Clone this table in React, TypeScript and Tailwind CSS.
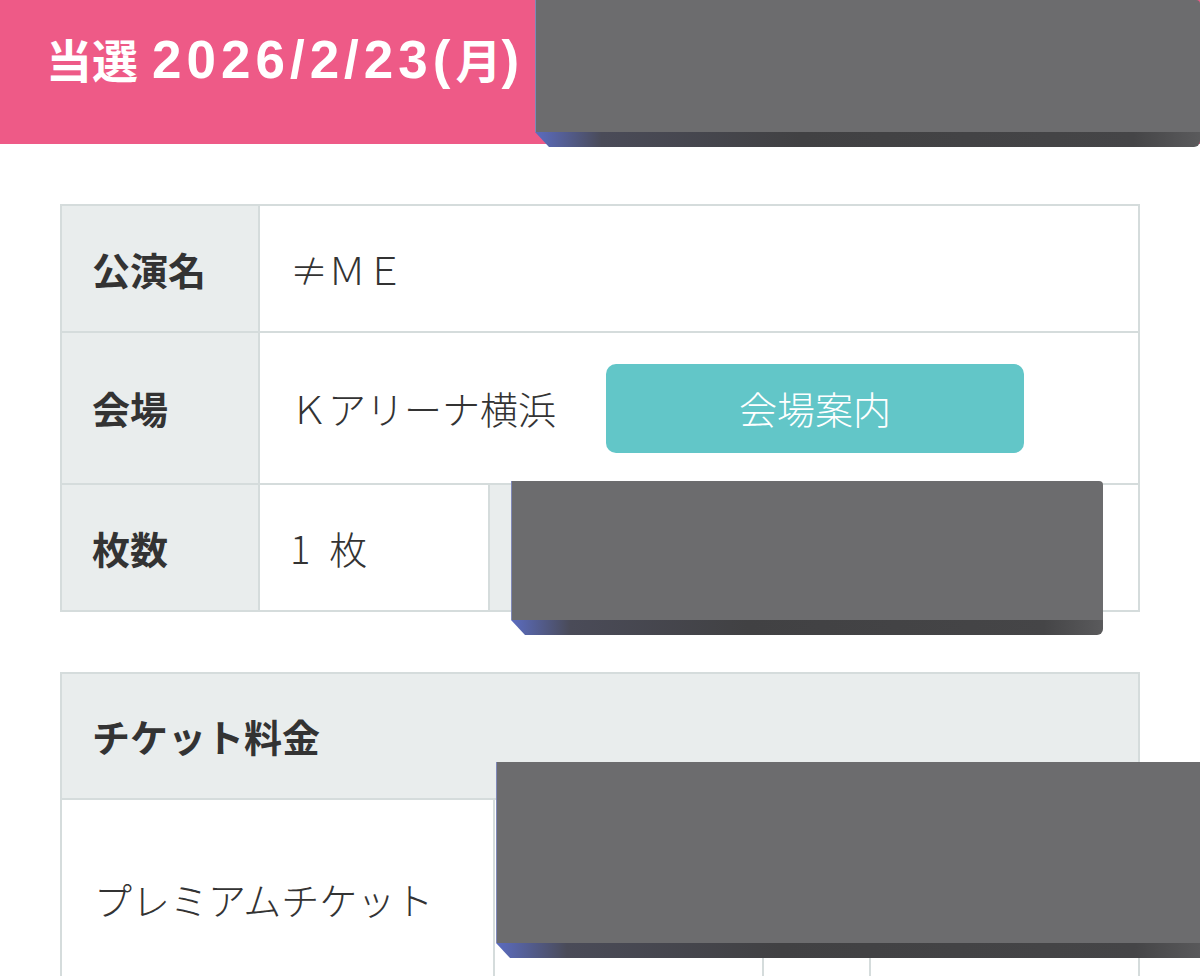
import React from 'react'

// gray redaction block laid over the page (face + darker bevel along the bottom)
function Redact({ className }: { className: string }) {
  return (
    <div className={`absolute flex flex-col ${className}`}>
      <div className="flex-1 bg-[#6c6c6e] border-l border-[#7f88b8] rounded-tr-[4px]" />
      <div
        className="h-[15px] bg-[linear-gradient(90deg,#5b6cc0_0%,#4a4b58_10%,#414143_40%,#454547_90%,#5a5a5c_100%)] rounded-br-[6px]"
        style={{ clipPath: 'polygon(0 0, 100% 0, 100% 100%, 14px 100%)' }}
      />
    </div>
  )
}

const cell = 'border-2 border-[#d5dcdc]'
const label = `${cell} bg-[#e9eded] font-bold text-left pl-[30px] w-[198px]`
const latin = "font-['Liberation_Sans','Noto_Sans_CJK_JP',sans-serif] text-[53px]"

export default function App() {
  return (
    <div className="relative w-[1200px] h-[976px] overflow-hidden bg-white text-[#333] font-['Noto_Sans_CJK_JP',sans-serif]">
      <header className="h-[144px] bg-[#ee5a87] flex items-center pl-[46px] pb-[26px]">
        <h1 className="flex items-baseline text-white font-bold text-[46px] leading-none">
          <span>当選</span>
          <span className={`${latin} ml-[14px] tracking-[5px]`}>2026/2/23(</span>
          <span>月</span>
          <span className={latin}>)</span>
        </h1>
      </header>

      <main className="px-[60px] pt-[60px]">
        <table className="w-full border-collapse text-[38px] leading-none">
          <tbody>
            <tr className="h-[127px]">
              <th className={label}>公演名</th>
              <td className={`${cell} pl-[30px] font-light`} colSpan={3}>≠ＭＥ</td>
            </tr>
            <tr className="h-[152px]">
              <th className={label}>会場</th>
              <td className={`${cell} pl-[30px] font-light`} colSpan={3}>
                <div className="flex items-center">
                  <span className="w-[316px]">Ｋアリーナ横浜</span>
                  <button className="w-[418px] h-[89px] rounded-[10px] bg-[#62c6c8] text-white text-[38px] font-light">
                    会場案内
                  </button>
                </div>
              </td>
            </tr>
            <tr className="h-[127px]">
              <th className={label}>枚数</th>
              <td className={`${cell} pl-[30px] w-[230px] font-light`}>
                <span>1</span>
                <span className="ml-[19px]">枚</span>
              </td>
              <td className={`${cell} bg-[#e9eded] w-[220px]`} />
              <td className={cell} />
            </tr>
          </tbody>
        </table>

        <table className="mt-[60px] w-full border-collapse text-[38px] leading-none">
          <tbody>
            <tr className="h-[126px]">
              <th className={`${cell} bg-[#e9eded] font-bold text-left pl-[30px]`} colSpan={4}>
                チケット料金
              </th>
            </tr>
            <tr className="h-[200px]">
              <td className={`${cell} pl-[32px] w-[433px] font-light`}>プレミアムチケット</td>
              <td className={`${cell} w-[269px]`} />
              <td className={`${cell} w-[107px]`} />
              <td className={cell} />
            </tr>
          </tbody>
        </table>
      </main>

      <Redact className="left-[535px] top-0 w-[665px] h-[147px]" />
      <Redact className="left-[511px] top-[481px] w-[592px] h-[154px]" />
      <Redact className="left-[496px] top-[762px] w-[710px] h-[196px]" />
    </div>
  )
}
